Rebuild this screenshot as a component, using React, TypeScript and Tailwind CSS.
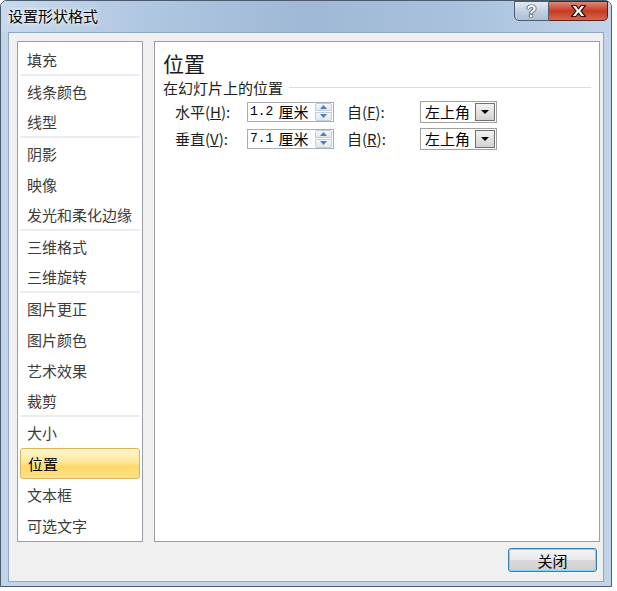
import React from 'react';

const groups: string[][] = [
  ['填充'],
  ['线条颜色', '线型'],
  ['阴影', '映像', '发光和柔化边缘'],
  ['三维格式', '三维旋转'],
  ['图片更正', '图片颜色', '艺术效果', '裁剪'],
  ['大小', '位置', '文本框', '可选文字'],
];

const selected = '位置';

function SpinButton() {
  return (
    <div className="flex flex-col w-[17px] h-[18px] ml-auto mr-[1px] gap-px">
      <div className="flex-1 flex items-center justify-center bg-[linear-gradient(to_bottom,#f4f7fb,#dfe7f1)] border border-[#c3cdd9] rounded-t-[2px]">
        <svg width="7" height="4" viewBox="0 0 7 4">
          <path d="M0 4 L3.5 0 L7 4 Z" fill="#4d7cc0" />
        </svg>
      </div>
      <div className="flex-1 flex items-center justify-center bg-[linear-gradient(to_bottom,#f4f7fb,#dfe7f1)] border border-[#c3cdd9] rounded-b-[2px]">
        <svg width="7" height="4" viewBox="0 0 7 4">
          <path d="M0 0 L7 0 L3.5 4 Z" fill="#4d7cc0" />
        </svg>
      </div>
    </div>
  );
}

function NumberBox({ value }: { value: string }) {
  return (
    <div className="w-[87px] h-[20px] bg-white border border-[#abadb3] flex items-center pl-[2px]">
      <span className="font-['Liberation_Mono',monospace] text-[13px] leading-none text-black">{value}</span>
      <span className="ml-[5px] text-[15px] leading-none text-black">厘米</span>
      <SpinButton />
    </div>
  );
}

function Dropdown({ value }: { value: string }) {
  return (
    <div className="w-[77px] h-[22px] bg-white border border-[#a0a0a0] flex items-center p-px">
      <span className="pl-[3px] text-[15px] leading-none text-black flex-1">{value}</span>
      <div className="w-[20px] h-[18px] bg-[linear-gradient(to_bottom,#f2f2f2,#d2d2d2)] border border-[#707070] flex items-center justify-center">
        <svg width="8" height="4" viewBox="0 0 8 4">
          <path d="M0 0 L8 0 L4 4 Z" fill="#000" />
        </svg>
      </div>
    </div>
  );
}

function Row({ label, keyChar, fromKey, num }: { label: string; keyChar: string; fromKey: string; num: string }) {
  return (
    <div className="flex items-center h-[27px] pl-[12px]">
      <div className="w-[72px] text-[15px] leading-none text-[#1e1e1e]">
        {label}(<span className="underline">{keyChar}</span>):
      </div>
      <NumberBox value={num} />
      <div className="ml-[13px] w-[73px] text-[15px] leading-none text-[#1e1e1e]">
        自(<span className="underline">{fromKey}</span>):
      </div>
      <Dropdown value="左上角" />
    </div>
  );
}

export default function App() {
  return (
    <div className="w-[617px] h-[591px] bg-white font-['Noto_Sans_CJK_SC','Microsoft_YaHei',sans-serif]">
      <div className="w-[612px] h-[587px] rounded-t-[7px] border border-[#4b5a6c] bg-[#c0d4ea] flex flex-col">
        {/* Title bar */}
        <div className="h-[31px] flex items-start rounded-t-[6px] bg-[linear-gradient(to_right,#c7d9ed,#afc6e0_25%,#9fb8d5_50%,#a9c1dc_75%,#c0d4ea)]">
          <div className="pl-[7px] pt-[5px] text-[15px] leading-[20px] text-black [text-shadow:0_0_6px_#ffffff,0_0_3px_#ffffff]">
            设置形状格式
          </div>
          <div className="ml-auto mr-[3px] flex">
            <div className="w-[35px] h-[20px] rounded-bl-[5px] border border-[#4e5e72] bg-[#b9c9dc] bg-[linear-gradient(to_bottom,#e4ebf3,#c2d1e2_50%,#aebfd3)] flex items-center justify-center">
              <span className="font-['Liberation_Sans',sans-serif] text-[17px] font-bold leading-none text-white [text-shadow:0_0_1px_#1f2c3c,0_0_1px_#1f2c3c,0_0_1px_#1f2c3c,0_0_1px_#1f2c3c]">
                ?
              </span>
            </div>
            <div className="w-[59px] h-[20px] rounded-br-[5px] border border-l-0 border-[#5e1f13] bg-[#c9412a] bg-[linear-gradient(to_bottom,#dc8b76,#c53c23_50%,#d5674d)] flex items-center justify-center">
              <svg width="17" height="14" viewBox="0 0 17 14">
                <path
                  d="M1.5 1.5 L6 1.5 L8.5 4.8 L11 1.5 L15.5 1.5 L11 7 L15.5 12.5 L11 12.5 L8.5 9.2 L6 12.5 L1.5 12.5 L6 7 Z"
                  fill="#ffffff"
                  stroke="#3b130b"
                  strokeWidth="1.2"
                  strokeLinejoin="round"
                />
              </svg>
            </div>
          </div>
        </div>

        {/* Client area */}
        <div className="mx-[7px] mb-[4px] flex-1 bg-[#f0f0f0] border border-[#8fa6c1] flex flex-col">
          <div className="flex gap-[11px] pt-[8px] pl-[8px] pr-[3px]">
            {/* Category list */}
            <div className="w-[126px] h-[501px] bg-white border border-[#9a9ea6] pt-[3px]">
              {groups.map((group, gi) =>
                group.map((item, ii) => {
                  const last = ii === group.length - 1 && gi < groups.length - 1;
                  const isSel = item === selected;
                  return (
                    <div
                      key={item}
                      className={
                        'h-[31px] mx-[2px] pl-[7px] flex items-center text-[15px] leading-none ' +
                        (last ? 'border-b-2 border-[#e8edf2] ' : '') +
                        (isSel
                          ? 'rounded-[3px] border border-[#deb259] bg-[linear-gradient(to_bottom,#fff6d0,#fde79a_45%,#fcd96a_60%,#fde28a)] text-black pl-[6px]'
                          : 'text-[#3c3c3c]')
                      }
                    >
                      {item}
                    </div>
                  );
                })
              )}
            </div>

            {/* Settings panel */}
            <div className="w-[446px] h-[501px] bg-white border border-[#9a9ea6] pl-[8px] pt-[7px]">
              <div className="text-[21px] leading-[28px] text-[#1a1a1a]">位置</div>
              <div className="flex items-center h-[20px]">
                <span className="text-[15px] leading-none text-[#1e1e1e]">在幻灯片上的位置</span>
                <div className="flex-1 h-px bg-[#d6dde4] ml-[6px] mr-[8px]" />
              </div>
              <div className="mt-px">
                <Row label="水平" keyChar="H" fromKey="F" num="1.2" />
                <Row label="垂直" keyChar="V" fromKey="R" num="7.1" />
              </div>
            </div>
          </div>

          {/* Footer */}
          <div className="flex justify-end pr-[6px] mt-[6px]">
            <button className="w-[89px] h-[24px] rounded-[3px] border border-[#3c7fb1] shadow-[inset_0_0_0_1px_#7fd3f7] bg-[linear-gradient(to_bottom,#f4f4f4,#e9e9e9_50%,#d9d9d9_52%,#d0d0d0)] text-[15px] leading-none text-black">
              关闭
            </button>
          </div>
        </div>
      </div>
    </div>
  );
}
